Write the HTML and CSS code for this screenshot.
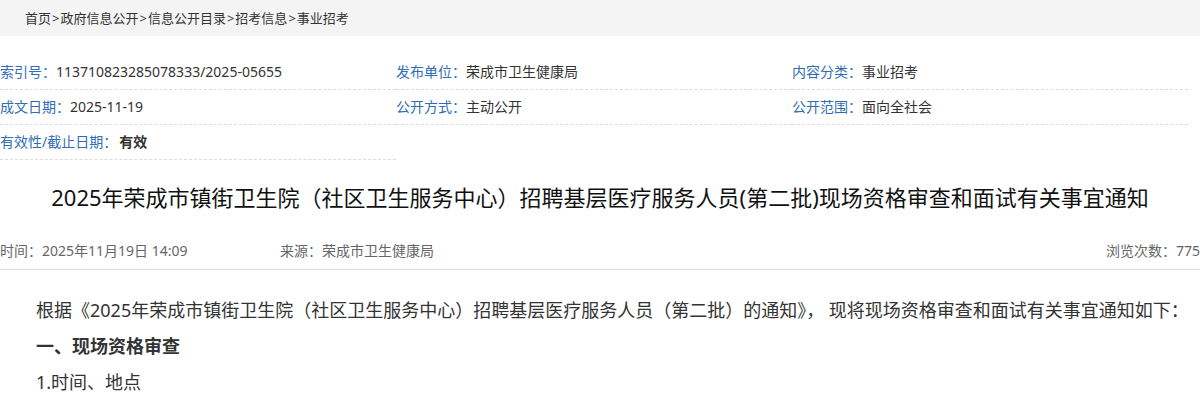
FILE: index.html
```html
<!DOCTYPE html>
<html lang="zh-CN">
<head>
  <meta charset="UTF-8" />
  <title>现场资格审查和面试有关事宜通知</title>
  <link rel="stylesheet" href="styles.css">
</head>
<body>
  <div class="crumb">
    <a href="#">首页</a>&gt;<a href="#">政府信息公开</a>&gt;<a href="#">信息公开目录</a>&gt;<a href="#">招考信息</a>&gt;<a href="#">事业招考</a>
  </div>

  <div class="page">
    <div class="meta">
      <div class="item"><span class="label">索引号：</span>113710823285078333/2025-05655</div>
      <div class="item"><span class="label">发布单位：</span>荣成市卫生健康局</div>
      <div class="item"><span class="label">内容分类：</span>事业招考</div>
      <div class="item"><span class="label">成文日期：</span>2025-11-19</div>
      <div class="item"><span class="label">公开方式：</span>主动公开</div>
      <div class="item"><span class="label">公开范围：</span>面向全社会</div>
      <div class="item"><span class="label">有效性/截止日期：</span><b>有效</b></div>
    </div>

    <h1 class="title">2025年荣成市镇街卫生院（社区卫生服务中心）招聘基层医疗服务人员(第二批)现场资格审查和面试有关事宜通知</h1>

    <div class="info">
      <span class="time">时间：2025年11月19日 14:09</span>
      <span class="source">来源：荣成市卫生健康局</span>
      <span class="views">浏览次数：775</span>
    </div>

    <div class="content">
      <p>根据《2025年荣成市镇街卫生院（社区卫生服务中心）招聘基层医疗服务人员（第二批）的通知》， 现将现场资格审查和面试有关事宜通知如下：</p>
      <p><b>一、现场资格审查</b></p>
      <p>1.时间、地点</p>
    </div>
  </div>
</body>
</html>
```

FILE: styles.css
```css
:root {
  --label-color: #2f6db5;
  --text-color: #333;
  --muted: #666;
  --line: #dcdcdc;
}

* {
  box-sizing: border-box;
}

body {
  margin: 0;
  font-family: "Noto Sans", "Noto Sans CJK SC", sans-serif;
  color: var(--text-color);
  background: #fff;
}

.crumb {
  height: 36px;
  line-height: 36px;
  padding-left: 25px;
  background: #f4f4f4;
  font-size: 13px;
  color: #333;
}

.crumb a {
  margin: 0 1px;
  color: #333;
  text-decoration: none;
}

.crumb a:first-child {
  margin-left: 0;
}

.page {
  width: 1200px;
}

.meta {
  display: grid;
  grid-template-columns: repeat(3, 396px);
  margin-top: 19px;
}

.item {
  height: 35px;
  line-height: 34px;
  font-size: 14px;
  border-bottom: 1px dashed var(--line);
  white-space: nowrap;
}

.item .label {
  color: var(--label-color);
}

.item b {
  margin-left: 2px;
}

.title {
  margin: 0;
  padding: 21px 0 0;
  height: 75px;
  text-align: center;
  font-size: 22px;
  font-weight: normal;
  line-height: 32px;
  color: #111;
}

.info {
  display: flex;
  height: 35px;
  line-height: 32px;
  font-size: 14px;
  color: var(--muted);
  border-bottom: 1px solid var(--line);
}

.info .time {
  width: 280px;
}

.info .views {
  margin-left: auto;
}

.content {
  padding: 22px 0 0 36px;
  font-size: 18px;
  line-height: 36px;
}

.content p {
  margin: 0;
}
```
